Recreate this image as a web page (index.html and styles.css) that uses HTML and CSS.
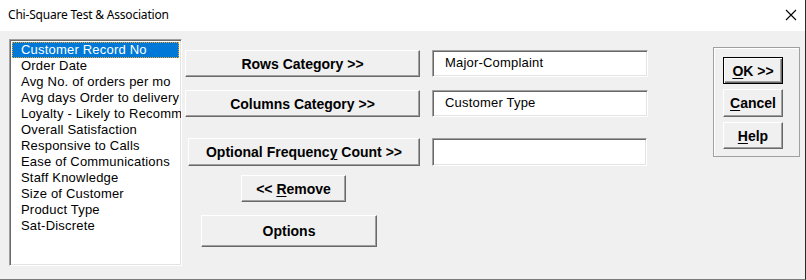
FILE: index.html
```html
<!DOCTYPE html>
<html lang="en">
<head>
  <meta charset="UTF-8">
  <title>Chi-Square Test &amp; Association</title>
  <link rel="stylesheet" href="styles.css">
</head>
<body>

  <div class="window">
    <div class="titlebar">
      <span class="title">Chi-Square Test &amp; Association</span>
      <svg class="close" width="12" height="12" viewBox="0 0 12 12">
        <path d="M1 1 L11 11 M11 1 L1 11" stroke="#000" stroke-width="1.1" fill="none"/>
      </svg>
    </div>

    <div class="content">
      <div class="listbox">
        <div class="item selected">Customer Record No</div>
        <div class="item">Order Date</div>
        <div class="item">Avg No. of orders per mo</div>
        <div class="item">Avg days Order to delivery</div>
        <div class="item">Loyalty - Likely to Recommend</div>
        <div class="item">Overall Satisfaction</div>
        <div class="item">Responsive to Calls</div>
        <div class="item">Ease of Communications</div>
        <div class="item">Staff Knowledge</div>
        <div class="item">Size of Customer</div>
        <div class="item">Product Type</div>
        <div class="item">Sat-Discrete</div>
      </div>

      <div class="middle">
        <div class="row">
          <button class="btn wide">Rows Category &gt;&gt;</button>
          <div class="field">Major-Complaint</div>
        </div>
        <div class="row second">
          <button class="btn wide">Columns Category &gt;&gt;</button>
          <div class="field">Customer Type</div>
        </div>
        <div class="row third">
          <button class="btn freq">Optional Frequenc<u>y</u> Count &gt;&gt;</button>
          <div class="field freq-field"></div>
        </div>
        <button class="btn remove">&lt;&lt; <u>R</u>emove</button>
        <button class="btn options">Options</button>
      </div>

      <div class="frame">
        <button class="btn side default"><u>O</u>K &gt;&gt;</button>
        <button class="btn side cancel"><u>C</u>ancel</button>
        <button class="btn side"><u>H</u>elp</button>
      </div>
    </div>
  </div>

</body>
</html>
```

FILE: styles.css
```css
body {
  margin: 0;
  font-family: "Liberation Sans", Arial, sans-serif;
  font-size: 13px;
  color: #000;
}
.window {
  width: 806px;
  height: 280px;
  box-sizing: border-box;
  background: #f0f0f0;
  border-right: 1px solid #2b2b2b;
  border-bottom: 1px solid #7a7a7a;
  overflow: hidden;
}
.titlebar {
  height: 31px;
  background: #fff;
  display: flex;
  align-items: center;
  justify-content: space-between;
  padding: 0 8px 2px 8px;
  box-sizing: border-box;
}
.title {
  font-family: "Noto Sans", sans-serif;
  font-size: 12px;
  letter-spacing: -0.2px;
}
.close {
  margin-right: 0;
}
.content {
  display: flex;
  align-items: flex-start;
  padding: 8px 0 0 9px;
}
.listbox {
  width: 173px;
  height: 227px;
  box-sizing: border-box;
  background: #fff;
  border: 1px solid;
  border-color: #a0a0a0 #fff #fff #a0a0a0;
  box-shadow: inset 1px 1px #696969, inset -1px -1px #e3e3e3;
  padding: 2px 2px 0 2px;
  overflow: hidden;
  white-space: nowrap;
}
.item {
  height: 16px;
  line-height: 16px;
  padding-left: 9px;
  box-sizing: border-box;
  letter-spacing: 0.2px;
}
.item.selected {
  background: #0078d7;
  color: #fff;
  outline: 1px dotted #f4a020;
  outline-offset: -1px;
}
.middle {
  display: flex;
  flex-direction: column;
  align-items: flex-start;
  margin: 11px 0 0 3px;
}
.row {
  display: flex;
  align-items: flex-start;
}
.row.second {
  margin-top: 13px;
}
.row.third {
  margin-top: 21px;
}
.btn {
  font-family: "Liberation Sans", Arial, sans-serif;
  font-size: 14px;
  font-weight: bold;
  color: #000;
  background: #f0f0f0;
  border: 1px solid;
  border-color: #fff #696969 #696969 #fff;
  box-shadow: inset -1px -1px #a0a0a0;
  padding: 0;
  box-sizing: border-box;
  height: 27px;
}
.btn u {
  text-underline-offset: 2px;
}
.wide {
  width: 235px;
}
.freq {
  width: 232px;
  height: 28px;
  margin-left: 3px;
}
.field {
  width: 216px;
  height: 27px;
  margin-left: 12px;
  box-sizing: border-box;
  background: #fff;
  border: 1px solid;
  border-color: #a0a0a0 #fff #fff #a0a0a0;
  box-shadow: inset 1px 1px #696969, inset -1px -1px #e3e3e3;
  padding: 4px 0 0 12px;
  letter-spacing: 0.2px;
}
.freq-field {
  width: 215px;
  height: 28px;
}
.remove {
  width: 105px;
  margin: 9px 0 0 56px;
}
.options {
  width: 176px;
  height: 32px;
  margin: 13px 0 0 16px;
}
.frame {
  width: 87px;
  height: 110px;
  box-sizing: border-box;
  margin: 8px 0 0 65px;
  border: 1px solid #a0a0a0;
  box-shadow: inset 1px 1px #fff;
  display: flex;
  flex-direction: column;
  gap: 5px;
  padding: 9px 0 0 9px;
}
.side {
  width: 60px;
}
.side.cancel {
  height: 28px;
}
.side.default {
  border: 1px solid #000;
  box-shadow: inset 1px 1px #fff, inset -1px -1px #696969, inset -2px -2px #a0a0a0;
}
```
